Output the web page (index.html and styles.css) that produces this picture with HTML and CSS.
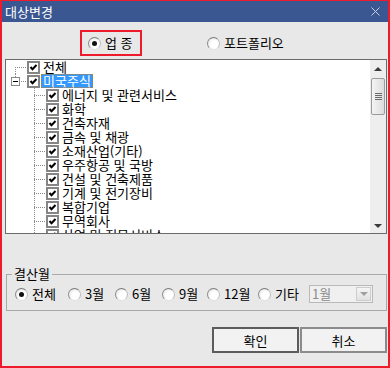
FILE: index.html
```html
<!DOCTYPE html>
<html lang="ko">
<head>
    <meta charset="UTF-8">
    <title>대상변경</title>
    <link rel="stylesheet" href="styles.css">
</head>
<body>
    <div class="dialog">
        <div class="titlebar">
            <span class="title">대상변경</span>
            <svg class="close" viewBox="0 0 9 9"><path d="M0.5 0.5L8.5 8.5M8.5 0.5L0.5 8.5" stroke="#c9d1e2" stroke-width="1"/></svg>
        </div>

        <div class="scope">
            <label class="scope-opt picked"><span class="radio on"></span>업 종</label>
            <label class="scope-opt plain"><span class="radio"></span>포트폴리오</label>
        </div>

        <div class="tree">
            <div class="rows">
                <div class="row">
                    <span class="guide guide-first"></span>
                    <span class="check"><svg viewBox="0 0 9 9"><polyline points="1.5,4 3.5,6.3 7.5,2" fill="none" stroke="#000" stroke-width="2"/></svg></span>
                    <span class="name">전체</span>
                </div>
                <div class="row">
                    <span class="guide guide-open"><span class="expander"></span></span>
                    <span class="check"><svg viewBox="0 0 9 9"><polyline points="1.5,4 3.5,6.3 7.5,2" fill="none" stroke="#000" stroke-width="2"/></svg></span>
                    <span class="name sel">미국주식</span>
                </div>
                <div class="row"><span class="guide guide-child"></span><span class="check"><svg viewBox="0 0 9 9"><polyline points="1.5,4 3.5,6.3 7.5,2" fill="none" stroke="#000" stroke-width="2"/></svg></span><span class="name">에너지 및 관련서비스</span></div>
                <div class="row"><span class="guide guide-child"></span><span class="check"><svg viewBox="0 0 9 9"><polyline points="1.5,4 3.5,6.3 7.5,2" fill="none" stroke="#000" stroke-width="2"/></svg></span><span class="name">화학</span></div>
                <div class="row"><span class="guide guide-child"></span><span class="check"><svg viewBox="0 0 9 9"><polyline points="1.5,4 3.5,6.3 7.5,2" fill="none" stroke="#000" stroke-width="2"/></svg></span><span class="name">건축자재</span></div>
                <div class="row"><span class="guide guide-child"></span><span class="check"><svg viewBox="0 0 9 9"><polyline points="1.5,4 3.5,6.3 7.5,2" fill="none" stroke="#000" stroke-width="2"/></svg></span><span class="name">금속 및 채광</span></div>
                <div class="row"><span class="guide guide-child"></span><span class="check"><svg viewBox="0 0 9 9"><polyline points="1.5,4 3.5,6.3 7.5,2" fill="none" stroke="#000" stroke-width="2"/></svg></span><span class="name">소재산업(기타)</span></div>
                <div class="row"><span class="guide guide-child"></span><span class="check"><svg viewBox="0 0 9 9"><polyline points="1.5,4 3.5,6.3 7.5,2" fill="none" stroke="#000" stroke-width="2"/></svg></span><span class="name">우주항공 및 국방</span></div>
                <div class="row"><span class="guide guide-child"></span><span class="check"><svg viewBox="0 0 9 9"><polyline points="1.5,4 3.5,6.3 7.5,2" fill="none" stroke="#000" stroke-width="2"/></svg></span><span class="name">건설 및 건축제품</span></div>
                <div class="row"><span class="guide guide-child"></span><span class="check"><svg viewBox="0 0 9 9"><polyline points="1.5,4 3.5,6.3 7.5,2" fill="none" stroke="#000" stroke-width="2"/></svg></span><span class="name">기계 및 전기장비</span></div>
                <div class="row"><span class="guide guide-child"></span><span class="check"><svg viewBox="0 0 9 9"><polyline points="1.5,4 3.5,6.3 7.5,2" fill="none" stroke="#000" stroke-width="2"/></svg></span><span class="name">복합기업</span></div>
                <div class="row"><span class="guide guide-child"></span><span class="check"><svg viewBox="0 0 9 9"><polyline points="1.5,4 3.5,6.3 7.5,2" fill="none" stroke="#000" stroke-width="2"/></svg></span><span class="name">무역회사</span></div>
                <div class="row"><span class="guide guide-child"></span><span class="check"><svg viewBox="0 0 9 9"><polyline points="1.5,4 3.5,6.3 7.5,2" fill="none" stroke="#000" stroke-width="2"/></svg></span><span class="name">상업 및 전문서비스</span></div>
            </div>
            <div class="vscroll">
                <div class="sb-btn"><span class="tri-up"></span></div>
                <div class="sb-thumb"><i></i><i></i><i></i><i></i></div>
                <div class="sb-space"></div>
                <div class="sb-btn down"><span class="tri-down"></span></div>
            </div>
        </div>

        <fieldset class="settle">
            <legend>결산월</legend>
            <div class="months">
                <label class="month"><span class="radio on"></span>전체</label>
                <label class="month"><span class="radio"></span>3월</label>
                <label class="month"><span class="radio"></span>6월</label>
                <label class="month"><span class="radio"></span>9월</label>
                <label class="month"><span class="radio"></span>12월</label>
                <label class="month"><span class="radio"></span>기타</label>
                <div class="combo">
                    <span>1월</span>
                    <span class="combo-btn"><span class="tri-down gray"></span></span>
                </div>
            </div>
        </fieldset>

        <div class="actions">
            <button class="btn default">확인</button>
            <button class="btn">취소</button>
        </div>
    </div>
</body>
</html>
```

FILE: styles.css
```css
* {
    box-sizing: border-box;
}

body {
    margin: 0;
    font-family: "Noto Sans CJK KR", "Noto Sans", sans-serif;
    font-size: 13px;
    color: #000;
    background: #fff;
}

.dialog {
    width: 390px;
    height: 368px;
    border: 2px solid #ee1b2c;
    border-top-width: 1px;
    background: #e8e8e8;
}

.titlebar {
    height: 21px;
    background: #3a5791;
    color: #fff;
    display: flex;
    align-items: center;
    justify-content: space-between;
    padding: 0 8px 0 3px;
}

.title {
    line-height: 14px;
}

.close {
    width: 9px;
    height: 9px;
}

/* top choice */
.scope {
    display: flex;
    align-items: flex-start;
    height: 37px;
    padding: 8px 0 0 78px;
}

.scope-opt {
    display: flex;
    align-items: center;
    gap: 4px;
    height: 26px;
    line-height: 14px;
}

.scope-opt.picked {
    width: 62px;
    border: 2px solid #ee1b2c;
    padding-left: 6px;
}

.scope-opt.plain {
    margin-left: 65px;
}

.radio {
    flex: none;
    width: 13px;
    height: 13px;
    border-radius: 50%;
    border: 1px solid;
    border-color: #7c7c7c #bdbdbd #e2e2e2 #8a8a8a;
    background: radial-gradient(circle at 60% 60%, #ffffff 0 40%, #d9d9d9 100%);
    display: flex;
    align-items: center;
    justify-content: center;
}

.radio.on::after {
    content: "";
    width: 5px;
    height: 5px;
    border-radius: 50%;
    background: #111;
}

/* tree */
.tree {
    height: 175px;
    margin: 0 1px 0 3px;
    border: 1px solid #6b6b6b;
    background: #fff;
    display: flex;
}

.rows {
    flex: 1;
    overflow: hidden;
}

.row {
    display: flex;
    align-items: center;
    height: 14px;
}

.guide {
    flex: none;
    height: 14px;
    background-repeat: no-repeat;
}

.guide-first {
    width: 21px;
    background-image:
        repeating-linear-gradient(to right, #8a8a8a 0 1px, transparent 1px 2px),
        repeating-linear-gradient(to bottom, #8a8a8a 0 1px, transparent 1px 2px);
    background-position: 9px 7px, 9px 7px;
    background-size: 12px 1px, 1px 7px;
}

.guide-open {
    width: 21px;
    display: flex;
    align-items: center;
    padding-left: 5px;
    background-image:
        repeating-linear-gradient(to right, #8a8a8a 0 1px, transparent 1px 2px),
        repeating-linear-gradient(to bottom, #8a8a8a 0 1px, transparent 1px 2px);
    background-position: 15px 7px, 9px 0;
    background-size: 6px 1px, 1px 3px;
}

.expander {
    width: 9px;
    height: 9px;
    border: 1px solid #8a8a8a;
    background: #fff;
    display: flex;
    align-items: center;
    justify-content: center;
}

.expander::after {
    content: "";
    width: 5px;
    height: 1px;
    background: #000;
}

.guide-child {
    width: 40px;
    background-image:
        repeating-linear-gradient(to right, #8a8a8a 0 1px, transparent 1px 2px),
        repeating-linear-gradient(to bottom, #8a8a8a 0 1px, transparent 1px 2px);
    background-position: 28px 7px, 28px 0;
    background-size: 11px 1px, 1px 14px;
}

.check {
    flex: none;
    width: 13px;
    height: 13px;
    border: 2px solid #858585;
    background: #fff;
    display: flex;
    align-items: center;
    justify-content: center;
}

.check svg {
    width: 9px;
    height: 9px;
}

.name {
    margin-left: 1px;
    padding: 0 2px;
    line-height: 14px;
    white-space: nowrap;
}

.name.sel {
    background: #3399ff;
    color: #fff;
    outline: 1px dotted #b7802f;
    outline-offset: -1px;
}

/* scrollbar */
.vscroll {
    flex: none;
    width: 16px;
    background: #eeeeee;
    display: flex;
    flex-direction: column;
    align-items: center;
}

.sb-btn {
    width: 16px;
    height: 17px;
    display: flex;
    align-items: center;
    justify-content: center;
    padding-top: 1px;
}

.sb-btn.down {
    padding-top: 3px;
}

.tri-up {
    width: 0;
    height: 0;
    border-left: 4px solid transparent;
    border-right: 4px solid transparent;
    border-bottom: 4px solid #3a3a3a;
}

.tri-down {
    width: 0;
    height: 0;
    border-left: 4px solid transparent;
    border-right: 4px solid transparent;
    border-top: 4px solid #3a3a3a;
}

.tri-down.gray {
    border-top-color: #a0a0a0;
}

.sb-thumb {
    width: 14px;
    height: 37px;
    margin-top: 1px;
    border: 1px solid #9b9b9b;
    border-radius: 2px;
    background: linear-gradient(to right, #f4f4f4, #dcdcdc);
    display: flex;
    flex-direction: column;
    align-items: center;
    justify-content: center;
    gap: 1px;
}

.sb-thumb i {
    width: 7px;
    height: 1px;
    background: #6a6a6a;
}

.sb-space {
    flex: 1;
}

/* settlement month */
.settle {
    margin: 33px 1px 0 4px;
    padding: 4px 0 7px 8px;
    border: 1px solid #a9a9a9;
    min-width: 0;
}

.settle legend {
    margin-left: -3px;
    padding: 0 2px;
    line-height: 14px;
}

.months {
    display: grid;
    grid-template-columns: 53px 47px 47px 45px 51px 51px auto;
    align-items: center;
    height: 18px;
}

.month {
    display: flex;
    align-items: center;
    gap: 4px;
    line-height: 14px;
}

.combo {
    width: 64px;
    height: 18px;
    border: 1px solid #b9b9b9;
    background: #f0f0f0;
    color: #8c8c8c;
    display: flex;
    align-items: center;
    justify-content: space-between;
    padding: 0 1px 0 2px;
    line-height: 14px;
}

.combo-btn {
    width: 15px;
    height: 14px;
    border: 1px solid #cdcdcd;
    background: linear-gradient(#f5f5f5, #e1e1e1);
    display: flex;
    align-items: center;
    justify-content: center;
}

/* buttons */
.actions {
    display: flex;
    justify-content: flex-end;
    gap: 1px;
    margin: 16px 1px 0 0;
}

.btn {
    width: 87px;
    height: 26px;
    padding: 0;
    font: inherit;
    color: #000;
    background: #f2f2f2;
    border: 2px solid #8b8b8b;
}

.btn.default {
    border-color: #5c5c5c;
}
```
